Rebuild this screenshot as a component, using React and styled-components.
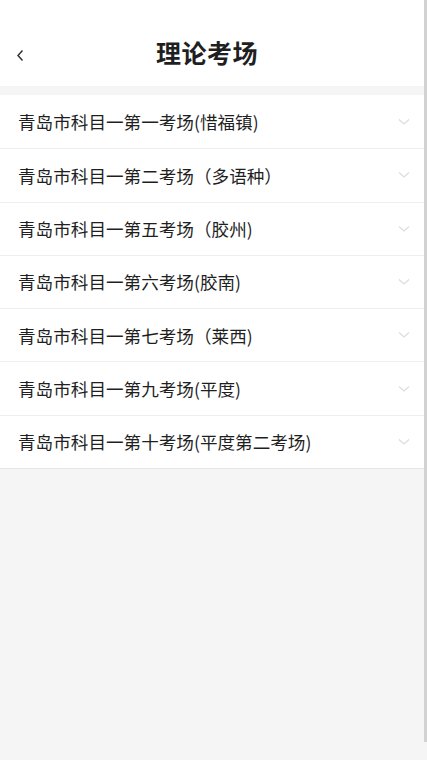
import React from "react";
import styled, { createGlobalStyle } from "styled-components";

const Global = createGlobalStyle`
  html, body { margin: 0; padding: 0; background: #f5f5f5; }
  body { font-family: "Noto Sans CJK SC", "Noto Sans", sans-serif; }
  * { box-sizing: border-box; }
`;

const Page = styled.div`
  min-height: 760px;
  background: #f5f5f5;
  width: 427px;
`;

const Header = styled.header`
  height: 86px;
  background: #fff;
  display: flex;
  align-items: center;
  justify-content: center;
  position: relative;
  padding: 18px 13px 0 0;
`;

const Back = styled.button`
  position: absolute;
  left: 14px;
  top: 43px;
  width: 12px;
  height: 24px;
  border: 0;
  background: none;
  padding: 0;
  display: flex;
  align-items: center;
  justify-content: center;
`;

const Title = styled.h1`
  margin: 0;
  font-size: 25px;
  font-weight: 700;
  color: #1f1f1f;
  letter-spacing: 0.5px;
`;

const List = styled.ul`
  list-style: none;
  margin: 9px 0 0;
  padding: 0;
  background: #fff;
  border-bottom: 1px solid #e6e6e6;
`;

const Row = styled.li`
  height: 53.3px;
  display: flex;
  align-items: center;
  justify-content: space-between;
  padding: 0 17px 0 18px;
  font-size: 17.6px;
  color: #1f1f1f;
  & + & { border-top: 1px solid #eeeeee; }
`;

const Label = styled.span`
  line-height: 1;
`;

const Scroll = styled.div`
  position: fixed;
  right: 0;
  top: 0;
  width: 3px;
  height: 742px;
  background: #d2d2d2;
`;

const Chevron = () => (
  <svg width="12" height="8" viewBox="0 0 12 8" fill="none">
    <path d="M1 1.5 L6 6 L11 1.5" stroke="#dcdcdc" strokeWidth="1.1" />
  </svg>
);

const items = [
  "青岛市科目一第一考场(惜福镇)",
  "青岛市科目一第二考场（多语种）",
  "青岛市科目一第五考场（胶州)",
  "青岛市科目一第六考场(胶南)",
  "青岛市科目一第七考场（莱西)",
  "青岛市科目一第九考场(平度)",
  "青岛市科目一第十考场(平度第二考场)",
];

export default function App() {
  return (
    <Page>
      <Global />
      <Header>
        <Back aria-label="back">
          <svg width="8" height="13" viewBox="0 0 8 13" fill="none">
            <path d="M6.5 1.5 L2 6.5 L6.5 11.5" stroke="#333" strokeWidth="1.5" />
          </svg>
        </Back>
        <Title>理论考场</Title>
      </Header>
      <List>
        {items.map((t) => (
          <Row key={t}>
            <Label>{t}</Label>
            <Chevron />
          </Row>
        ))}
      </List>
      <Scroll />
    </Page>
  );
}
